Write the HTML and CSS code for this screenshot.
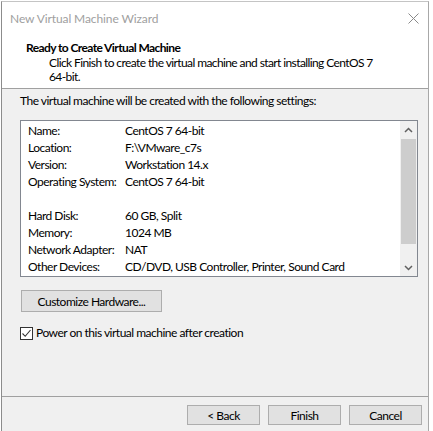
FILE: index.html
```html
<!DOCTYPE html>
<html>
<head>
<meta charset="utf-8">
<link rel="stylesheet" href="styles.css">
</head>
<body>
<div class="window">
  <div class="top">
    <div class="titlebar">
      <span class="title">New Virtual Machine Wizard</span>
      <svg class="close" width="11" height="11" viewBox="0 0 11 11"><path d="M0.5 0.5 L10.5 10.5 M10.5 0.5 L0.5 10.5" stroke="#8a8a8a" stroke-width="1" fill="none"/></svg>
    </div>
    <div class="header">
      <div class="h-title">Ready to Create Virtual Machine</div>
      <div class="h-desc">Click Finish to create the virtual machine and start installing CentOS 7<br>64-bit.</div>
    </div>
  </div>
  <div class="body">
    <div class="intro">The virtual machine will be created with the following settings:</div>
    <div class="listbox">
      <div class="rows">
        <div class="row"><span class="k">Name:</span><span>CentOS 7 64-bit</span></div>
        <div class="row"><span class="k">Location:</span><span>F:\VMware_c7s</span></div>
        <div class="row"><span class="k">Version:</span><span>Workstation 14.x</span></div>
        <div class="row"><span class="k">Operating System:</span><span>CentOS 7 64-bit</span></div>
        <div class="row"></div>
        <div class="row"><span class="k">Hard Disk:</span><span>60 GB, Split</span></div>
        <div class="row"><span class="k">Memory:</span><span>1024 MB</span></div>
        <div class="row"><span class="k">Network Adapter:</span><span>NAT</span></div>
        <div class="row"><span class="k">Other Devices:</span><span>CD/DVD, USB Controller, Printer, Sound Card</span></div>
      </div>
      <div class="scrollbar">
        <div class="sb-btn"><svg width="9" height="6" viewBox="0 0 9 6"><path d="M1 5 L4.5 1.5 L8 5" stroke="#606060" stroke-width="1.5" fill="none"/></svg></div>
        <div class="sb-thumb"></div>
        <div class="sb-track"></div>
        <div class="sb-btn"><svg width="9" height="6" viewBox="0 0 9 6"><path d="M1 1 L4.5 4.5 L8 1" stroke="#606060" stroke-width="1.5" fill="none"/></svg></div>
      </div>
    </div>
    <button class="btn custom">Customize Hardware...</button>
    <label class="check"><span class="box"><svg width="11" height="11" viewBox="0 0 11 11"><path d="M1.5 5.5 L4.2 8.3 L9.5 2" stroke="#333" stroke-width="1.1" fill="none"/></svg></span>Power on this virtual machine after creation</label>
  </div>
  <div class="footer">
    <button class="btn nav">&lt; Back</button>
    <button class="btn nav">Finish</button>
    <button class="btn nav">Cancel</button>
  </div>
</div>
</body>
</html>
```

FILE: styles.css
```css
html, body {
  margin: 0;
  padding: 0;
  background: #ffffff;
}
body {
  padding: 1px 0 0 1px;
  font-family: Lato, "Liberation Sans", sans-serif;
  font-size: 12px;
  letter-spacing: -0.5px;
  color: #000;
}
.window {
  width: 426px;
  height: 430px;
  border-left: 1px solid #8c8c8c;
  border-right: 1px solid #a8a8a8;
  border-top: 1px solid #c4c4c4;
  background: #f0f0f0;
  display: flex;
  flex-direction: column;
}
.top {
  background: #fff;
  height: 86px;
  border-bottom: 1px solid #a0a0a0;
}
.titlebar {
  height: 33px;
  display: flex;
  align-items: center;
  justify-content: space-between;
  padding: 0 9px 0 8px;
}
.title {
  color: #a0a0a0;
  font-size: 12px;
  letter-spacing: -0.1px;
}
.header {
  padding-left: 24px;
  white-space: nowrap;
}
.h-title {
  font-weight: bold;
  line-height: 16px;
  margin-top: 5px;
  letter-spacing: -0.6px;
}
.h-desc {
  padding-left: 23px;
  line-height: 14px;
  letter-spacing: -0.6px;
}
.body {
  flex: 1;
  padding: 4px 0 0 18px;
  display: flex;
  flex-direction: column;
  align-items: flex-start;
  border-bottom: 1px solid #a0a0a0;
}
.intro {
  line-height: 16px;
}
.listbox {
  margin-top: 11px;
  width: 396px;
  height: 155px;
  border: 1px solid #828790;
  background: #fff;
  display: flex;
}
.rows {
  flex: 1;
  padding: 1px 0 0 7px;
}
.row {
  height: 17px;
  line-height: 17px;
  display: flex;
  white-space: nowrap;
}
.k {
  width: 97px;
  flex: none;
}
.scrollbar {
  width: 17px;
  background: #f0f0f0;
  display: flex;
  flex-direction: column;
}
.sb-btn {
  height: 17px;
  display: flex;
  align-items: center;
  justify-content: center;
}
.sb-thumb {
  height: 105px;
  background: #cdcdcd;
  margin: 1px 1px 0 1px;
}
.sb-track {
  flex: 1;
}
.btn {
  font-family: inherit;
  font-size: 12px;
  letter-spacing: -0.5px;
  background: #e1e1e1;
  border: 1px solid #adadad;
  color: #000;
  padding: 0;
  margin: 0;
}
.custom {
  margin: 13px 0 0 1px;
  width: 141px;
  height: 22px;
}
.check {
  margin-top: 13px;
  display: flex;
  align-items: center;
  line-height: 16px;
}
.box {
  width: 11px;
  height: 11px;
  border: 1px solid #333;
  background: #fff;
  margin-right: 3px;
  display: flex;
}
.footer {
  height: 35px;
  display: flex;
  justify-content: flex-end;
  align-items: flex-start;
  padding: 8px 6px 0 0;
  gap: 8px;
  box-sizing: border-box;
}
.nav {
  width: 73px;
  height: 20px;
}
```
